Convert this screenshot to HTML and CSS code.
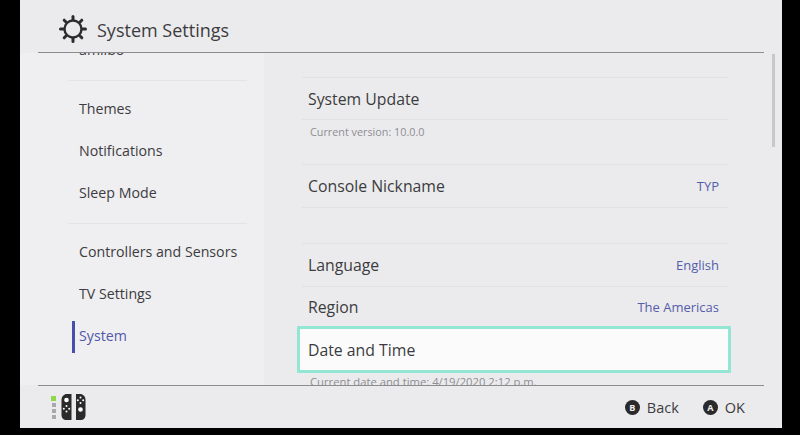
FILE: index.html
```html
<!DOCTYPE html>
<html lang="en">
<head>
    <meta charset="UTF-8">
    <meta name="viewport" content="width=device-width, initial-scale=1.0">
    <title>System Settings</title>
    <link rel="stylesheet" href="styles.css">
</head>
<body>
    <div class="screen">
        <header class="top-bar">
            <svg class="gear-icon" width="28" height="28" viewBox="0 0 28 28">
                <circle cx="14" cy="14" r="8.500" fill="none" stroke="#2d2d2d" stroke-width="2.400"/>
                <g stroke="#2d2d2d" stroke-width="3" stroke-linecap="round">
                    <path d="M14 1.500V4.500"/>
                    <path d="M14 23.500V26.500"/>
                    <path d="M1.500 14H4.500"/>
                    <path d="M23.500 14H26.500"/>
                    <path d="M5.200 5.200L7 7"/>
                    <path d="M21 21L22.800 22.800"/>
                    <path d="M5.200 22.800L7 21"/>
                    <path d="M21 7L22.800 5.200"/>
                </g>
            </svg>
            <span class="top-title">System Settings</span>
        </header>

        <div class="content">
            <nav class="sidebar">
                <div class="nav-clipped">amiibo</div>
                <div class="nav-group">
                    <div class="nav-item">Themes</div>
                    <div class="nav-item">Notifications</div>
                    <div class="nav-item">Sleep Mode</div>
                </div>
                <div class="nav-group">
                    <div class="nav-item">Controllers and Sensors</div>
                    <div class="nav-item">TV Settings</div>
                    <div class="nav-item active">System</div>
                </div>
            </nav>

            <main class="panel">
                <div class="row row-update">System Update</div>
                <div class="row-note">Current version: 10.0.0</div>
                <div class="row row-nick">
                    <span>Console Nickname</span>
                    <span class="row-value">TYP</span>
                </div>
                <div class="row row-language">
                    <span>Language</span>
                    <span class="row-value">English</span>
                </div>
                <div class="row row-region">
                    <span>Region</span>
                    <span class="row-value">The Americas</span>
                </div>
                <div class="row row-selected">Date and Time</div>
                <div class="row-note row-note-clipped">Current date and time: 4/19/2020 2:12 p.m.</div>
            </main>

            <div class="scroll-track"><div class="scroll-thumb"></div></div>
        </div>

        <footer class="bottom-bar">
            <div class="controller">
                <div class="player-dots">
                    <span class="player-dot lit"></span>
                    <span class="player-dot"></span>
                    <span class="player-dot"></span>
                    <span class="player-dot"></span>
                </div>
                <svg width="25" height="26" viewBox="0 0 25 26">
                    <path d="M10.500 0V26H5.500C2.500 26 0.500 24 0.500 21V6C0.500 2.500 3 0 6 0Z" fill="#2a2a2a"/>
                    <path d="M15 0V26H19.500C22.500 26 24.500 24 24.500 21V6C24.500 2.500 22 0 19 0Z" fill="#2a2a2a"/>
                    <circle cx="5.500" cy="6" r="2.300" fill="#fff"/>
                    <circle cx="19.500" cy="15.500" r="2.300" fill="#fff"/>
                    <g fill="#fff">
                        <circle cx="5.500" cy="12" r="1"/>
                        <circle cx="5.500" cy="17.400" r="1"/>
                        <circle cx="2.800" cy="14.700" r="1"/>
                        <circle cx="8.200" cy="14.700" r="1"/>
                        <circle cx="19.500" cy="3.500" r="1"/>
                        <circle cx="19.500" cy="8.900" r="1"/>
                        <circle cx="16.800" cy="6.200" r="1"/>
                        <circle cx="22.200" cy="6.200" r="1"/>
                    </g>
                </svg>
            </div>
            <div class="hints">
                <div class="hint"><span class="btn-badge">B</span>Back</div>
                <div class="hint"><span class="btn-badge">A</span>OK</div>
            </div>
        </footer>
    </div>
</body>
</html>
```

FILE: styles.css
```css
html, body {
    margin: 0;
    height: 100%;
    background-color: #000;
    overflow: hidden;
}

body {
    font-family: 'Open Sans', 'Noto Sans', sans-serif;
    color: #3c3c40;
}

.screen {
    box-sizing: border-box;
    width: 762px;
    height: 428px;
    margin-left: 20px;
    padding: 0 18px;
    background-color: #ebebed;
    display: flex;
    flex-direction: column;
}

.top-bar {
    box-sizing: border-box;
    height: 53px;
    flex: none;
    display: flex;
    align-items: center;
    padding: 7px 0 0 21px;
    gap: 10px;
    border-bottom: 1px solid #8c8c8e;
}

.gear-icon {
    margin-top: -2px;
}

.top-title {
    font-size: 18px;
    color: #3c3c40;
}

.content {
    flex: 1;
    min-height: 0;
    display: flex;
    overflow: hidden;
    margin: 0 -18px;
}

.sidebar {
    width: 244px;
    flex: none;
    box-sizing: border-box;
    padding: 0 17px 0 48px;
    background-color: #efeef0;
    font-size: 14.2px;
}

.nav-clipped {
    height: 40px;
    margin-top: -13px;
    padding-left: 11px;
    border-bottom: 1px solid #e4e4e6;
    line-height: 20px;
}

.nav-group {
    padding: 8px 0 8px 11px;
    border-bottom: 1px solid #e4e4e6;
}

.nav-group:last-child {
    border-bottom: none;
}

.nav-item {
    height: 42px;
    line-height: 40px;
    position: relative;
}

.nav-item.active {
    color: #4f58a8;
}

.nav-item.active::before {
    content: "";
    position: absolute;
    left: -7px;
    top: 5px;
    width: 3px;
    height: 32px;
    background-color: #4650ac;
}

.panel {
    width: 426px;
    flex: none;
    margin-left: 38px;
    font-size: 15.8px;
}

.row {
    display: flex;
    justify-content: space-between;
    align-items: center;
    padding: 0 9px 0 6px;
}

.row-update {
    height: 41px;
    margin-top: 24px;
    border-top: 1px solid #e2e2e4;
    border-bottom: 1px solid #e2e2e4;
}

.row-note {
    font-size: 10.8px;
    color: #8e8e92;
    padding-left: 8px;
    height: 44px;
    line-height: 24px;
}

.row-nick {
    height: 42px;
    border-top: 1px solid #e2e2e4;
    border-bottom: 1px solid #e2e2e4;
    margin-bottom: 35px;
}

.row-language {
    height: 42px;
    border-top: 1px solid #e2e2e4;
    border-bottom: 1px solid #e2e2e4;
}

.row-region {
    height: 39px;
}

.row-value {
    font-size: 13px;
    color: #555cab;
}

.row-selected {
    box-sizing: border-box;
    height: 47px;
    margin-left: -5px;
    margin-right: -3px;
    padding-left: 8px;
    border: 3px solid #93e6d3;
    border-radius: 1px;
    background-color: #fbfbfc;
}

.row-note-clipped {
    font-size: 11.25px;
    height: 12px;
    line-height: 17px;
    overflow: hidden;
}

.scroll-track {
    margin-left: 44px;
    padding-top: 1px;
}

.scroll-thumb {
    width: 3px;
    height: 93px;
    background-color: #c8c8ca;
}

.bottom-bar {
    height: 42px;
    flex: none;
    display: flex;
    align-items: center;
    justify-content: space-between;
    border-top: 1px solid #8c8c8e;
    padding: 0 19px 0 13px;
}

.controller {
    display: flex;
    align-items: center;
    gap: 5px;
}

.player-dots {
    display: flex;
    flex-direction: column;
    align-items: center;
    gap: 2px;
}

.player-dot {
    width: 4px;
    height: 4px;
    background-color: #a9a9ab;
}

.player-dot.lit {
    width: 5px;
    height: 5px;
    background-color: #8ed94a;
}

.hints {
    display: flex;
    gap: 24px;
}

.hint {
    display: flex;
    align-items: center;
    gap: 7px;
    font-size: 14.5px;
    color: #3c3c40;
}

.btn-badge {
    width: 15px;
    height: 15px;
    border-radius: 50%;
    background-color: #2a2a2c;
    color: #eee;
    font-size: 9px;
    font-weight: 700;
    display: flex;
    align-items: center;
    justify-content: center;
}
```
